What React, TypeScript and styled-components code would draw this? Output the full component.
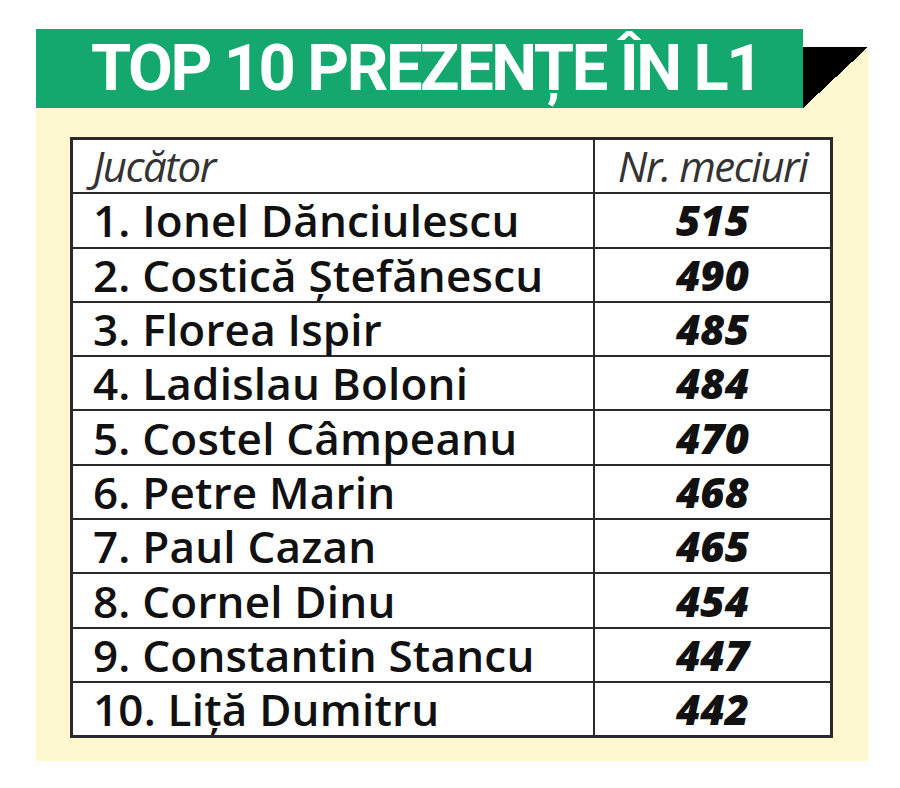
import React from 'react';
import styled, { createGlobalStyle } from 'styled-components';

const players = [
    { name: '1. Ionel Dănciulescu', games: 515 },
    { name: '2. Costică Ștefănescu', games: 490 },
    { name: '3. Florea Ispir', games: 485 },
    { name: '4. Ladislau Boloni', games: 484 },
    { name: '5. Costel Câmpeanu', games: 470 },
    { name: '6. Petre Marin', games: 468 },
    { name: '7. Paul Cazan', games: 465 },
    { name: '8. Cornel Dinu', games: 454 },
    { name: '9. Constantin Stancu', games: 447 },
    { name: '10. Liță Dumitru', games: 442 },
];

const App = () => {
    return (
        <>
            <GlobalStyle />
            <Card>
                <Header>
                    <Title>TOP 10 PREZENȚE ÎN L1</Title>
                    <Corner />
                </Header>
                <Body>
                    <Table>
                        <thead>
                            <tr>
                                <HeadCell>Jucător</HeadCell>
                                <HeadCell $right>Nr. meciuri</HeadCell>
                            </tr>
                        </thead>
                        <tbody>
                            {players.map((p) => (
                                <tr key={p.name}>
                                    <NameCell>{p.name}</NameCell>
                                    <GamesCell>{p.games}</GamesCell>
                                </tr>
                            ))}
                        </tbody>
                    </Table>
                </Body>
            </Card>
        </>
    );
};

const GlobalStyle = createGlobalStyle`
    body {
        margin: 0;
        background: #ffffff;
        font-family: 'Open Sans', 'Liberation Sans', sans-serif;
    }
`;

const Card = styled.div`
    width: 832px;
    margin: 29px 0 0 36px;
`;

const Header = styled.div`
    display: flex;
    align-items: flex-end;
    height: 79px;
`;

const Title = styled.h1`
    width: 767px;
    height: 79px;
    margin: 0;
    box-sizing: border-box;
    padding-left: 55px;
    background: #14a86f;
    color: #ffffff;
    font-family: Roboto, 'Open Sans', sans-serif;
    font-weight: 700;
    font-size: 65px;
    line-height: 79px;
    letter-spacing: -2.4px;
    white-space: nowrap;
`;

const Corner = styled.div`
    width: 65px;
    height: 61px;
    background: linear-gradient(to bottom right, #000000 50%, #fdf8cf 50%);
`;

const Body = styled.div`
    background: #fdf8cf;
    padding: 29px 35px 23px 34px;
`;

const Table = styled.table`
    width: 763px;
    border-collapse: collapse;
    border: 3px solid #2a2a2a;
    background: #ffffff;

    td,
    th {
        height: 52.3px;
        padding: 0;
        border-bottom: 2.5px solid #2a2a2a;
        line-height: 1;
    }
`;

const HeadCell = styled.th<{ $right?: boolean }>`
    font-style: italic;
    font-weight: 400;
    font-size: 42px;
    color: #333333;
    text-align: ${(p) => (p.$right ? 'center' : 'left')};
    padding-left: ${(p) => (p.$right ? '0' : '20px')} !important;
    width: ${(p) => (p.$right ? 'auto' : '500px')};
    border-right: ${(p) => (p.$right ? 'none' : '2.5px solid #2a2a2a')};
    letter-spacing: -1.5px;
`;

const NameCell = styled.td`
    font-weight: 600;
    font-size: 44px;
    color: #111111;
    padding-left: 20px !important;
    border-right: 2.5px solid #2a2a2a;
    white-space: nowrap;
    letter-spacing: 0.2px;
`;

const GamesCell = styled.td`
    text-align: center;
    font-style: italic;
    font-weight: 800;
    font-size: 42px;
    color: #111111;
`;

export default App;
